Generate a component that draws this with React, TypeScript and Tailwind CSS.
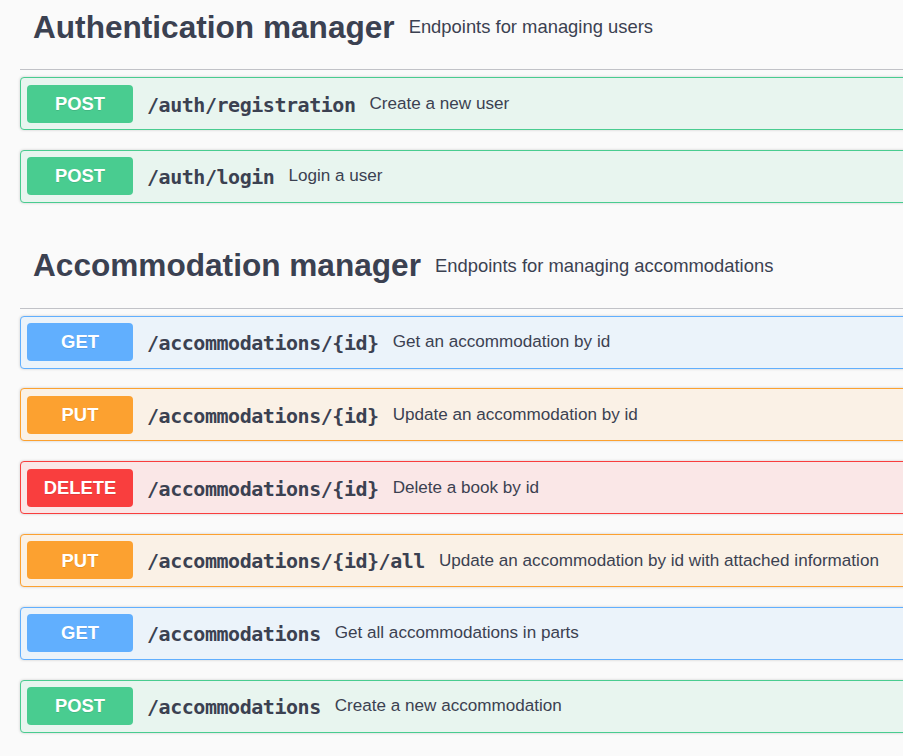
const sans = "font-['Liberation_Sans',Arial,sans-serif]"

type Method = "GET" | "POST" | "PUT" | "DELETE"

const methodStyles: Record<Method, { row: string; badge: string }> = {
    GET: { row: "border-[#61affe] bg-[#ebf3fa]", badge: "bg-[#61affe]" },
    POST: { row: "border-[#49cc90] bg-[#e8f5ef]", badge: "bg-[#49cc90]" },
    PUT: { row: "border-[#fca130] bg-[#faf1e6]", badge: "bg-[#fca130]" },
    DELETE: { row: "border-[#f93e3e] bg-[#fae7e7]", badge: "bg-[#f93e3e]" },
}

type Endpoint = { method: Method; path: string; summary: string }

const sections: { name: string; description: string; endpoints: Endpoint[] }[] = [
    {
        name: "Authentication manager",
        description: "Endpoints for managing users",
        endpoints: [
            { method: "POST", path: "/auth/registration", summary: "Create a new user" },
            { method: "POST", path: "/auth/login", summary: "Login a user" },
        ],
    },
    {
        name: "Accommodation manager",
        description: "Endpoints for managing accommodations",
        endpoints: [
            { method: "GET", path: "/accommodations/{id}", summary: "Get an accommodation by id" },
            { method: "PUT", path: "/accommodations/{id}", summary: "Update an accommodation by id" },
            { method: "DELETE", path: "/accommodations/{id}", summary: "Delete a book by id" },
            { method: "PUT", path: "/accommodations/{id}/all", summary: "Update an accommodation by id with attached information" },
            { method: "GET", path: "/accommodations", summary: "Get all accommodations in parts" },
            { method: "POST", path: "/accommodations", summary: "Create a new accommodation" },
        ],
    },
]

function OpBlock({ method, path, summary }: Endpoint) {
    const s = methodStyles[method]
    return (
        <div className={`flex items-center h-[53px] mb-[19.8px] border rounded-[4px] px-[6px] shadow-[0_0_3px_rgba(0,0,0,0.19)] ${s.row}`}>
            <span className={`${s.badge} w-[106px] h-[38px] rounded-[4px] flex items-center justify-center text-white font-bold text-[18.4px] ${sans} [text-shadow:0_1px_0_rgba(0,0,0,0.1)]`}>
                {method}
            </span>
            <span className="ml-[14px] pt-[2px] font-['DejaVu_Sans_Mono',monospace] font-bold text-[20px] tracking-[-0.46px] text-[#3b4151]">
                {path}
            </span>
            <span className={`ml-[14px] text-[17.1px] text-[#3b4151] ${sans}`}>{summary}</span>
        </div>
    )
}

export default function App() {
    return (
        <div className="w-[903px] h-[756px] overflow-hidden bg-[#fafafa]">
            <div className="w-[1100px] pl-[20px] -mt-[16px]">
                {sections.map((section) => (
                    <div key={section.name}>
                        {/* Tag header */}
                        <div className="flex items-center h-[86px] pl-[13px] mb-[7px] border-b border-[#c1c2c7]">
                            <h3 className={`text-[31.6px] leading-[36px] font-bold text-[#3b4151] ${sans}`}>{section.name}</h3>
                            <span className={`ml-[14px] text-[18.4px] leading-[21px] text-[#3b4151] ${sans}`}>{section.description}</span>
                        </div>
                        {section.endpoints.map((ep, i) => (
                            <OpBlock key={i} {...ep} />
                        ))}
                    </div>
                ))}
            </div>
        </div>
    )
}
